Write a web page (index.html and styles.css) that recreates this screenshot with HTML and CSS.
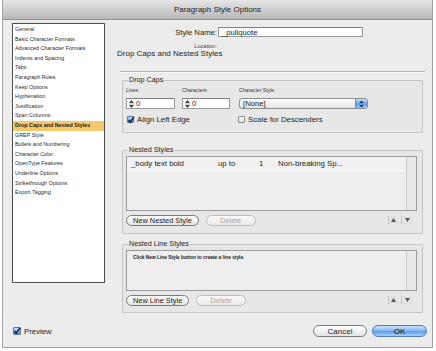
FILE: index.html
```html
<!DOCTYPE html>
<html lang="en">
<head>
    <meta charset="UTF-8">
    <meta name="viewport" content="width=device-width, initial-scale=1.0">
    <title>Paragraph Style Options</title>
    <link rel="stylesheet" href="styles.css">
</head>
<body>
    <div class="window">
        <div class="titlebar">Paragraph Style Options</div>

        <div class="panes">
            <!-- category list on the left -->
            <ul class="categories">
                <li>General</li>
                <li>Basic Character Formats</li>
                <li>Advanced Character Formats</li>
                <li>Indents and Spacing</li>
                <li>Tabs</li>
                <li>Paragraph Rules</li>
                <li>Keep Options</li>
                <li>Hyphenation</li>
                <li>Justification</li>
                <li>Span Columns</li>
                <li class="selected">Drop Caps and Nested Styles</li>
                <li>GREP Style</li>
                <li>Bullets and Numbering</li>
                <li>Character Color</li>
                <li>OpenType Features</li>
                <li>Underline Options</li>
                <li>Strikethrough Options</li>
                <li>Export Tagging</li>
            </ul>

            <main class="main">
                <div class="name-row">
                    <label class="field-label">Style Name:</label>
                    <div class="text-input name-input">_pullquote</div>
                </div>
                <div class="location-row">
                    <span class="field-label">Location:</span>
                </div>
                <h2 class="section-title">Drop Caps and Nested Styles</h2>
                <hr class="separator">

                <fieldset class="group drop-caps">
                    <legend>Drop Caps</legend>
                    <div class="caps-grid">
                        <span class="tiny-label">Lines</span>
                        <span class="tiny-label">Characters</span>
                        <span class="tiny-label">Character Style</span>

                        <div class="text-input spin-input">
                            <svg class="spin" width="5" height="8" viewBox="0 0 5 8">
                                <path d="M2.5 0 L5 3 L0 3 Z M0 5 L5 5 L2.5 8 Z" fill="#444"/>
                                <path d="M0 4 H5" stroke="#888" stroke-width="0.6"/>
                            </svg>0
                        </div>
                        <div class="text-input spin-input">
                            <svg class="spin" width="5" height="8" viewBox="0 0 5 8">
                                <path d="M2.5 0 L5 3 L0 3 Z M0 5 L5 5 L2.5 8 Z" fill="#444"/>
                                <path d="M0 4 H5" stroke="#888" stroke-width="0.6"/>
                            </svg>0
                        </div>
                        <div class="popup">
                            <span>[None]</span>
                            <span class="popup-arrow">
                                <svg width="5" height="8" viewBox="0 0 5 8">
                                    <path d="M2.5 0.5 L4.5 3 L0.5 3 Z M0.5 5 L4.5 5 L2.5 7.5 Z" fill="#1c2a44"/>
                                </svg>
                            </span>
                        </div>

                        <label class="check wide">
                            <span class="box checked">
                                <svg width="8" height="8" viewBox="0 0 8 8">
                                    <path d="M1.5 4 L3.2 6.2 L7 0.8" fill="none" stroke="#10203a" stroke-width="1.4"/>
                                </svg>
                            </span>
                            Align Left Edge
                        </label>
                        <label class="check">
                            <span class="box"></span>
                            Scale for Descenders
                        </label>
                    </div>
                </fieldset>

                <fieldset class="group nested">
                    <legend>Nested Styles</legend>
                    <div class="list-box nested-list">
                        <div class="rows">
                            <div class="style-row">
                                <span>_body text bold</span>
                                <span>up to</span>
                                <span>1</span>
                                <span>Non-breaking Sp...</span>
                            </div>
                        </div>
                        <div class="scroll-track"></div>
                    </div>
                    <div class="list-actions">
                        <button class="pill">New Nested Style</button>
                        <button class="pill disabled">Delete</button>
                        <span class="spacer"></span>
                        <span class="order-btn">
                            <svg width="5" height="4" viewBox="0 0 5 4"><path d="M2.5 0 L5 4 L0 4 Z" fill="#555"/></svg>
                        </span>
                        <span class="order-btn">
                            <svg width="5" height="4" viewBox="0 0 5 4"><path d="M0 0 L5 0 L2.5 4 Z" fill="#555"/></svg>
                        </span>
                    </div>
                </fieldset>

                <fieldset class="group line-styles">
                    <legend>Nested Line Styles</legend>
                    <div class="list-box line-list">
                        <div class="rows">
                            <p class="hint">Click New Line Style button to create a line style.</p>
                        </div>
                        <div class="scroll-track"></div>
                    </div>
                    <div class="list-actions">
                        <button class="pill">New Line Style</button>
                        <button class="pill disabled">Delete</button>
                        <span class="spacer"></span>
                        <span class="order-btn">
                            <svg width="5" height="4" viewBox="0 0 5 4"><path d="M2.5 0 L5 4 L0 4 Z" fill="#555"/></svg>
                        </span>
                        <span class="order-btn">
                            <svg width="5" height="4" viewBox="0 0 5 4"><path d="M0 0 L5 0 L2.5 4 Z" fill="#555"/></svg>
                        </span>
                    </div>
                </fieldset>
            </main>
        </div>

        <div class="footer">
            <label class="check preview">
                <span class="box checked">
                    <svg width="8" height="8" viewBox="0 0 8 8">
                        <path d="M1.5 4 L3.2 6.2 L7 0.8" fill="none" stroke="#10203a" stroke-width="1.4"/>
                    </svg>
                </span>
                Preview
            </label>
            <div class="dialog-buttons">
                <button class="pill big">Cancel</button>
                <button class="pill big default">OK</button>
            </div>
        </div>
    </div>
</body>
</html>
```

FILE: styles.css
```css
body {
    margin: 0;
    background: #ffffff;
    font-family: "Liberation Sans", Arial, sans-serif;
    color: #1c1c1c;
}

.window {
    margin-left: 2px;
    width: 431px;
    height: 348px;
    box-sizing: border-box;
    border: 1px solid #a2a2a2;
    border-top: none;
    background: #ececec;
    display: flex;
    flex-direction: column;
}

.titlebar {
    height: 19px;
    line-height: 19px;
    border-bottom: 1px solid #8f8f8f;
    background: linear-gradient(#e6e6e6, #b8b8b8);
    text-align: center;
    font-size: 8px;
    color: #222;
}

.panes {
    display: flex;
}

/* left category list */
.categories {
    list-style: none;
    margin: 3px 11px 0 9px;
    padding: 1px 0;
    width: 93px;
    height: 260px;
    box-sizing: border-box;
    border: 1px solid #4d4d4d;
    background: #ffffff;
}

.categories li {
    height: 9.6px;
    line-height: 9.6px;
    padding-left: 2px;
    font-size: 5.4px;
    color: #2a2a2a;
    white-space: nowrap;
}

.categories li.selected {
    background: #f6c86c;
    font-weight: bold;
    color: #1a1a1a;
}

/* right side */
.main {
    flex: 1;
    padding-top: 7px;
    min-width: 0;
}

.name-row {
    display: flex;
    align-items: center;
    height: 10px;
}

.field-label {
    display: inline-block;
    width: 101px;
    margin-right: 1px;
    text-align: right;
    font-size: 7.7px;
}

.text-input {
    box-sizing: border-box;
    border: 1px solid #9a9a9a;
    border-top-color: #7e7e7e;
    background: #ffffff;
    font-size: 7.7px;
    display: flex;
    align-items: center;
}

.name-input {
    width: 145px;
    height: 10px;
    padding-left: 3px;
}

.location-row {
    margin-top: 3px;
    height: 6px;
    line-height: 6px;
}

.location-row .field-label {
    font-size: 5.6px;
    color: #444;
}

.section-title {
    margin: 3px 0 0 1px;
    font-size: 8px;
    font-weight: normal;
    line-height: 10px;
}

.separator {
    margin: 12px 7px 0 4px;
    border: none;
    border-top: 1px solid #b4b4b4;
    border-bottom: 1px solid #fafafa;
}

.group {
    margin: 2px 9px 0 6px;
    padding: 0 5px 0 3px;
    border: 1px solid #c4c4c4;
    border-radius: 1px;
    background: #e7e7e7;
    min-width: 0;
}

.group legend {
    margin-left: 2px;
    padding: 0 1px;
    font-size: 7.2px;
    line-height: 10px;
}

/* drop caps */
.drop-caps {
    padding-bottom: 8px;
}

.caps-grid {
    display: grid;
    grid-template-columns: 49px 48px 131px;
    column-gap: 7px;
    margin-top: 2px;
}

.caps-grid .tiny-label:nth-child(3) {
    margin-left: 2px;
}

.tiny-label {
    font-size: 5.1px;
    line-height: 6px;
    color: #333;
}

.spin-input {
    margin-top: 5px;
    height: 11px;
    padding-left: 2px;
}

.spin {
    margin-right: 2px;
}

.popup {
    margin: 5px 0 0 2px;
    height: 11px;
    box-sizing: border-box;
    border: 1px solid #8d8d8d;
    border-radius: 3px;
    background: linear-gradient(#ffffff, #e4e4e4);
    display: flex;
    align-items: center;
    justify-content: space-between;
    padding-left: 3px;
    font-size: 7.7px;
    overflow: hidden;
}

.popup-arrow {
    width: 11px;
    height: 100%;
    background: linear-gradient(#c5dcf8, #5f9de6 55%, #9cc5f3);
    border-left: 1px solid #6f8fb8;
    display: flex;
    align-items: center;
    justify-content: center;
}

.check {
    display: flex;
    align-items: center;
    margin-top: 6px;
    height: 9px;
    font-size: 7.8px;
}

.check.wide {
    grid-column: span 2;
    padding-left: 1px;
}

.caps-grid .check:last-child {
    margin-left: 1px;
}

.box {
    width: 7px;
    height: 7px;
    margin-right: 3px;
    box-sizing: border-box;
    border: 1px solid #8a8a8a;
    border-radius: 1px;
    background: linear-gradient(#ffffff, #dedede);
    display: flex;
    align-items: center;
    justify-content: center;
    overflow: visible;
}

.box.checked {
    border-color: #5a79a8;
    background: linear-gradient(#c2daf7, #4f8ee0);
}

.box svg {
    flex: none;
}

/* nested style lists */
.nested {
    margin-top: 12px;
    padding-bottom: 7px;
}

.line-styles {
    margin-top: 5px;
    padding-bottom: 6px;
}

.list-box {
    display: flex;
    margin-top: 1px;
    box-sizing: border-box;
    border: 1px solid #9c9c9c;
    background: #eeeeee;
}

.nested-list {
    height: 55px;
}

.line-list {
    height: 41px;
}

.rows {
    flex: 1;
}

.style-row {
    display: grid;
    grid-template-columns: 87px 41px 19px auto;
    height: 13px;
    line-height: 13px;
    padding-left: 4px;
    font-size: 7.8px;
    background: #f1f1f1;
    border-bottom: 1px solid #fbfbfb;
}

.hint {
    margin: 4px 0 0 6px;
    font-size: 4.8px;
    font-weight: bold;
    color: #222;
}

.scroll-track {
    width: 9px;
    border-left: 1px solid #c9c9c9;
    background: #e9e9e9;
}

.list-actions {
    display: flex;
    align-items: center;
    margin-top: 3px;
    height: 12px;
}

.pill {
    height: 11px;
    padding: 0 6px;
    box-sizing: border-box;
    border: 1px solid #7a7a7a;
    border-radius: 6px;
    background: linear-gradient(#ffffff, #e3e3e3);
    font-family: "Liberation Sans", Arial, sans-serif;
    font-size: 7.4px;
    line-height: 9px;
    color: #1a1a1a;
    cursor: pointer;
}

.pill + .pill {
    margin-left: 7px;
}

.pill.disabled {
    width: 50px;
    border-color: #bdbdbd;
    color: #a8a8a8;
    background: linear-gradient(#f8f8f8, #ebebeb);
}

.spacer {
    flex: 1;
}

.order-btn {
    width: 10px;
    height: 8px;
    margin-right: 3px;
    box-sizing: border-box;
    border-left: 1px solid #c3c3c3;
    background: #e2e2e2;
    display: flex;
    align-items: center;
    justify-content: center;
}

.order-btn:last-child {
    width: 12px;
    margin-right: 4px;
}

/* bottom bar */
.footer {
    display: flex;
    align-items: center;
    justify-content: space-between;
    padding: 12px 5px 0 10px;
}

.preview {
    margin-top: 0;
    font-size: 7.8px;
}

.preview .box {
    width: 8px;
    height: 8px;
}

.dialog-buttons {
    display: flex;
}

.pill.big {
    height: 12px;
    width: 54px;
    font-size: 8px;
    border-radius: 7px;
}

.pill.big + .pill.big {
    margin-left: 5px;
    width: 55px;
}

.pill.default {
    border-color: #4f7bb8;
    background: linear-gradient(#d3e6fc, #7eb3f0 50%, #5d9de9 55%, #a9d0f7);
    color: #0e0e0e;
}
```
